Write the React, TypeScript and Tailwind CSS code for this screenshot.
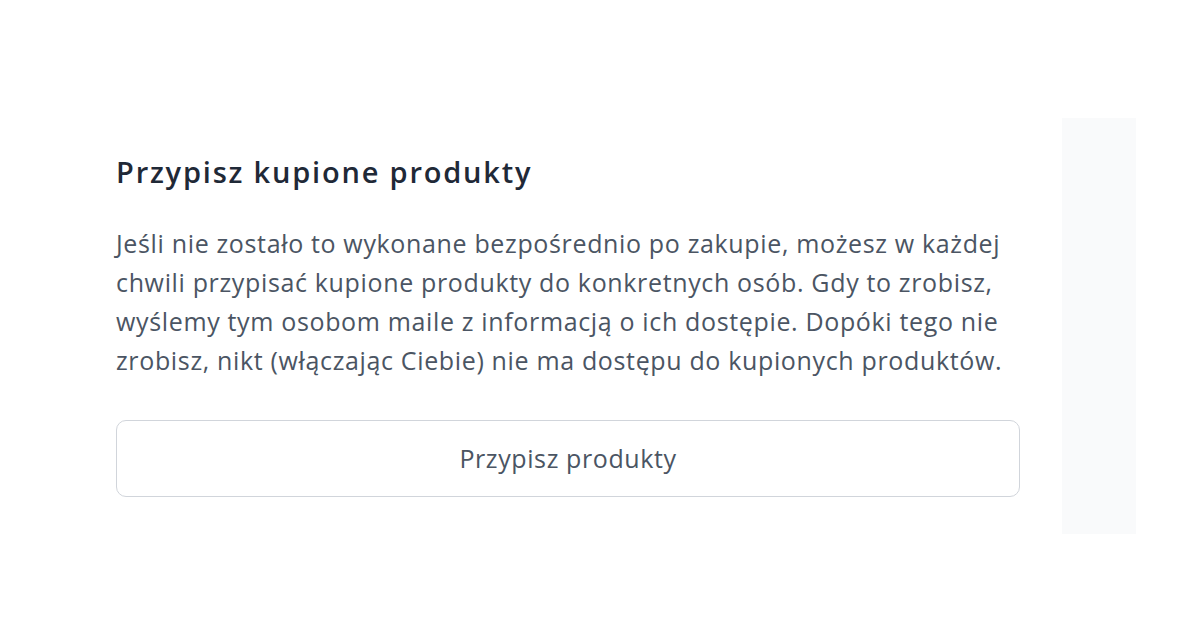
export default function App() {
  return (
    <div className="min-h-[630px] w-[1200px] bg-white font-['Open_Sans',sans-serif]">
      <div className="flex items-start gap-[42px] pl-[116px] pt-[118px]">
        <section className="mt-[34px] w-[904px]">
          <h2 className="text-[29px] font-semibold leading-[39px] tracking-[1.8px] text-[#1f2937]">
            Przypisz kupione produkty
          </h2>
          <p className="mt-[33px] text-[25px] leading-[39px] tracking-[0.65px] text-[#4b5563]">
            Jeśli nie zostało to wykonane bezpośrednio po zakupie, możesz w każdej
            chwili przypisać kupione produkty do konkretnych osób. Gdy to zrobisz,
            wyślemy tym osobom maile z informacją o ich dostępie. Dopóki tego nie
            zrobisz, nikt (włączając Ciebie) nie ma dostępu do kupionych produktów.
          </p>
          <button className="mt-[40px] flex h-[77px] w-full items-center justify-center rounded-[10px] border border-[#d1d5db] bg-white text-[25px] tracking-[0.6px] text-[#4b5563]">
            Przypisz produkty
          </button>
        </section>
        <aside className="h-[416px] w-[74px] bg-[#f9fafb]" />
      </div>
    </div>
  );
}
